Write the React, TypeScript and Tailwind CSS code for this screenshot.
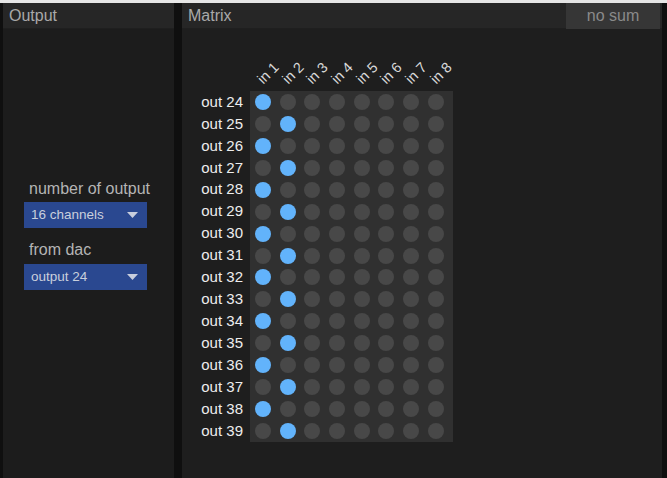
const outs = Array.from({ length: 16 }, (_, i) => 24 + i)
const ins = [1, 2, 3, 4, 5, 6, 7, 8]

function Caret() {
  return (
    <svg width="11" height="6" viewBox="0 0 11 6" className="shrink-0">
      <path d="M0 0 L11 0 L5.5 6 Z" fill="#c8cede" />
    </svg>
  )
}

function Select({ value }: { value: string }) {
  return (
    <div className="w-[123px] h-[26px] bg-[#2a4890] flex items-center justify-between pl-[7px] pr-[9px] text-[13.5px] text-[#c9cfdc]">
      <span>{value}</span>
      <Caret />
    </div>
  )
}

function PanelHeader({ title, children }: { title: string; children?: React.ReactNode }) {
  return (
    <div className="h-[26px] bg-[#262626] border-b border-[#1f1f1f] flex items-center justify-between pl-[6px] shrink-0">
      <span className="text-[16px] leading-none text-[#a9a9a9]">{title}</span>
      {children}
    </div>
  )
}

export default function App() {
  return (
    <div className="w-[667px] h-[478px] bg-[#0f0f0f] flex flex-col overflow-hidden" style={{ fontFamily: '"Liberation Sans", Arial, sans-serif' }}>
      <div className="h-[3px] bg-[#e6e6e6] shrink-0" />
      <div className="flex flex-1 pl-[3px] gap-[8px] pr-[5px] min-h-0">
        {/* output panel */}
        <div className="w-[171px] flex flex-col bg-[#1c1c1c]">
          <PanelHeader title="Output" />
          <div className="flex-1 flex flex-col pt-[151px] pl-[21px]">
            <div className="text-[16px] leading-[18px] text-[#b4b4b4] pl-[5px] mb-[4px]">number of output</div>
            <Select value="16 channels" />
            <div className="text-[16px] leading-[18px] text-[#b4b4b4] pl-[5px] mt-[13px] mb-[5px]">from dac</div>
            <Select value="output 24" />
          </div>
        </div>

        {/* matrix panel */}
        <div className="flex-1 flex flex-col bg-[#1e1e1e]">
          <PanelHeader title="Matrix">
            <div className="w-[94px] h-[26px] bg-[#363636] flex items-center justify-center text-[16px] text-[#8a8a8a] mr-[2px]">
              no sum
            </div>
          </PanelHeader>
          <div className="flex-1 pl-[7px]">
            <div className="flex h-[62px] pl-[61px]">
              {ins.map((n) => (
                <div key={n} className="relative w-[24.7px] h-full">
                  <span className="absolute left-[15px] bottom-[5px] origin-bottom-left -rotate-45 whitespace-nowrap text-[14.5px] leading-none text-[#d8d8d8]">
                    in {n}
                  </span>
                </div>
              ))}
            </div>
            <div className="flex gap-[7px]">
              <div className="w-[54px] flex flex-col">
                {outs.map((o) => (
                  <div key={o} className="h-[21.94px] flex items-center justify-end text-[15px] text-[#ededed] whitespace-nowrap">
                    out {o}
                  </div>
                ))}
              </div>
              <div className="bg-[#303030] w-[203px]">
                {outs.map((o, r) => (
                  <div key={o} className="h-[21.94px] flex items-center pl-[5px]">
                    {ins.map((n, c) => (
                      <div key={n} className="w-[24.7px] flex">
                        <div className={`w-[16px] h-[16px] rounded-full ${c === r % 2 ? 'bg-[#62b3fb]' : 'bg-[#484848]'}`} />
                      </div>
                    ))}
                  </div>
                ))}
              </div>
            </div>
          </div>
        </div>
      </div>
    </div>
  )
}
